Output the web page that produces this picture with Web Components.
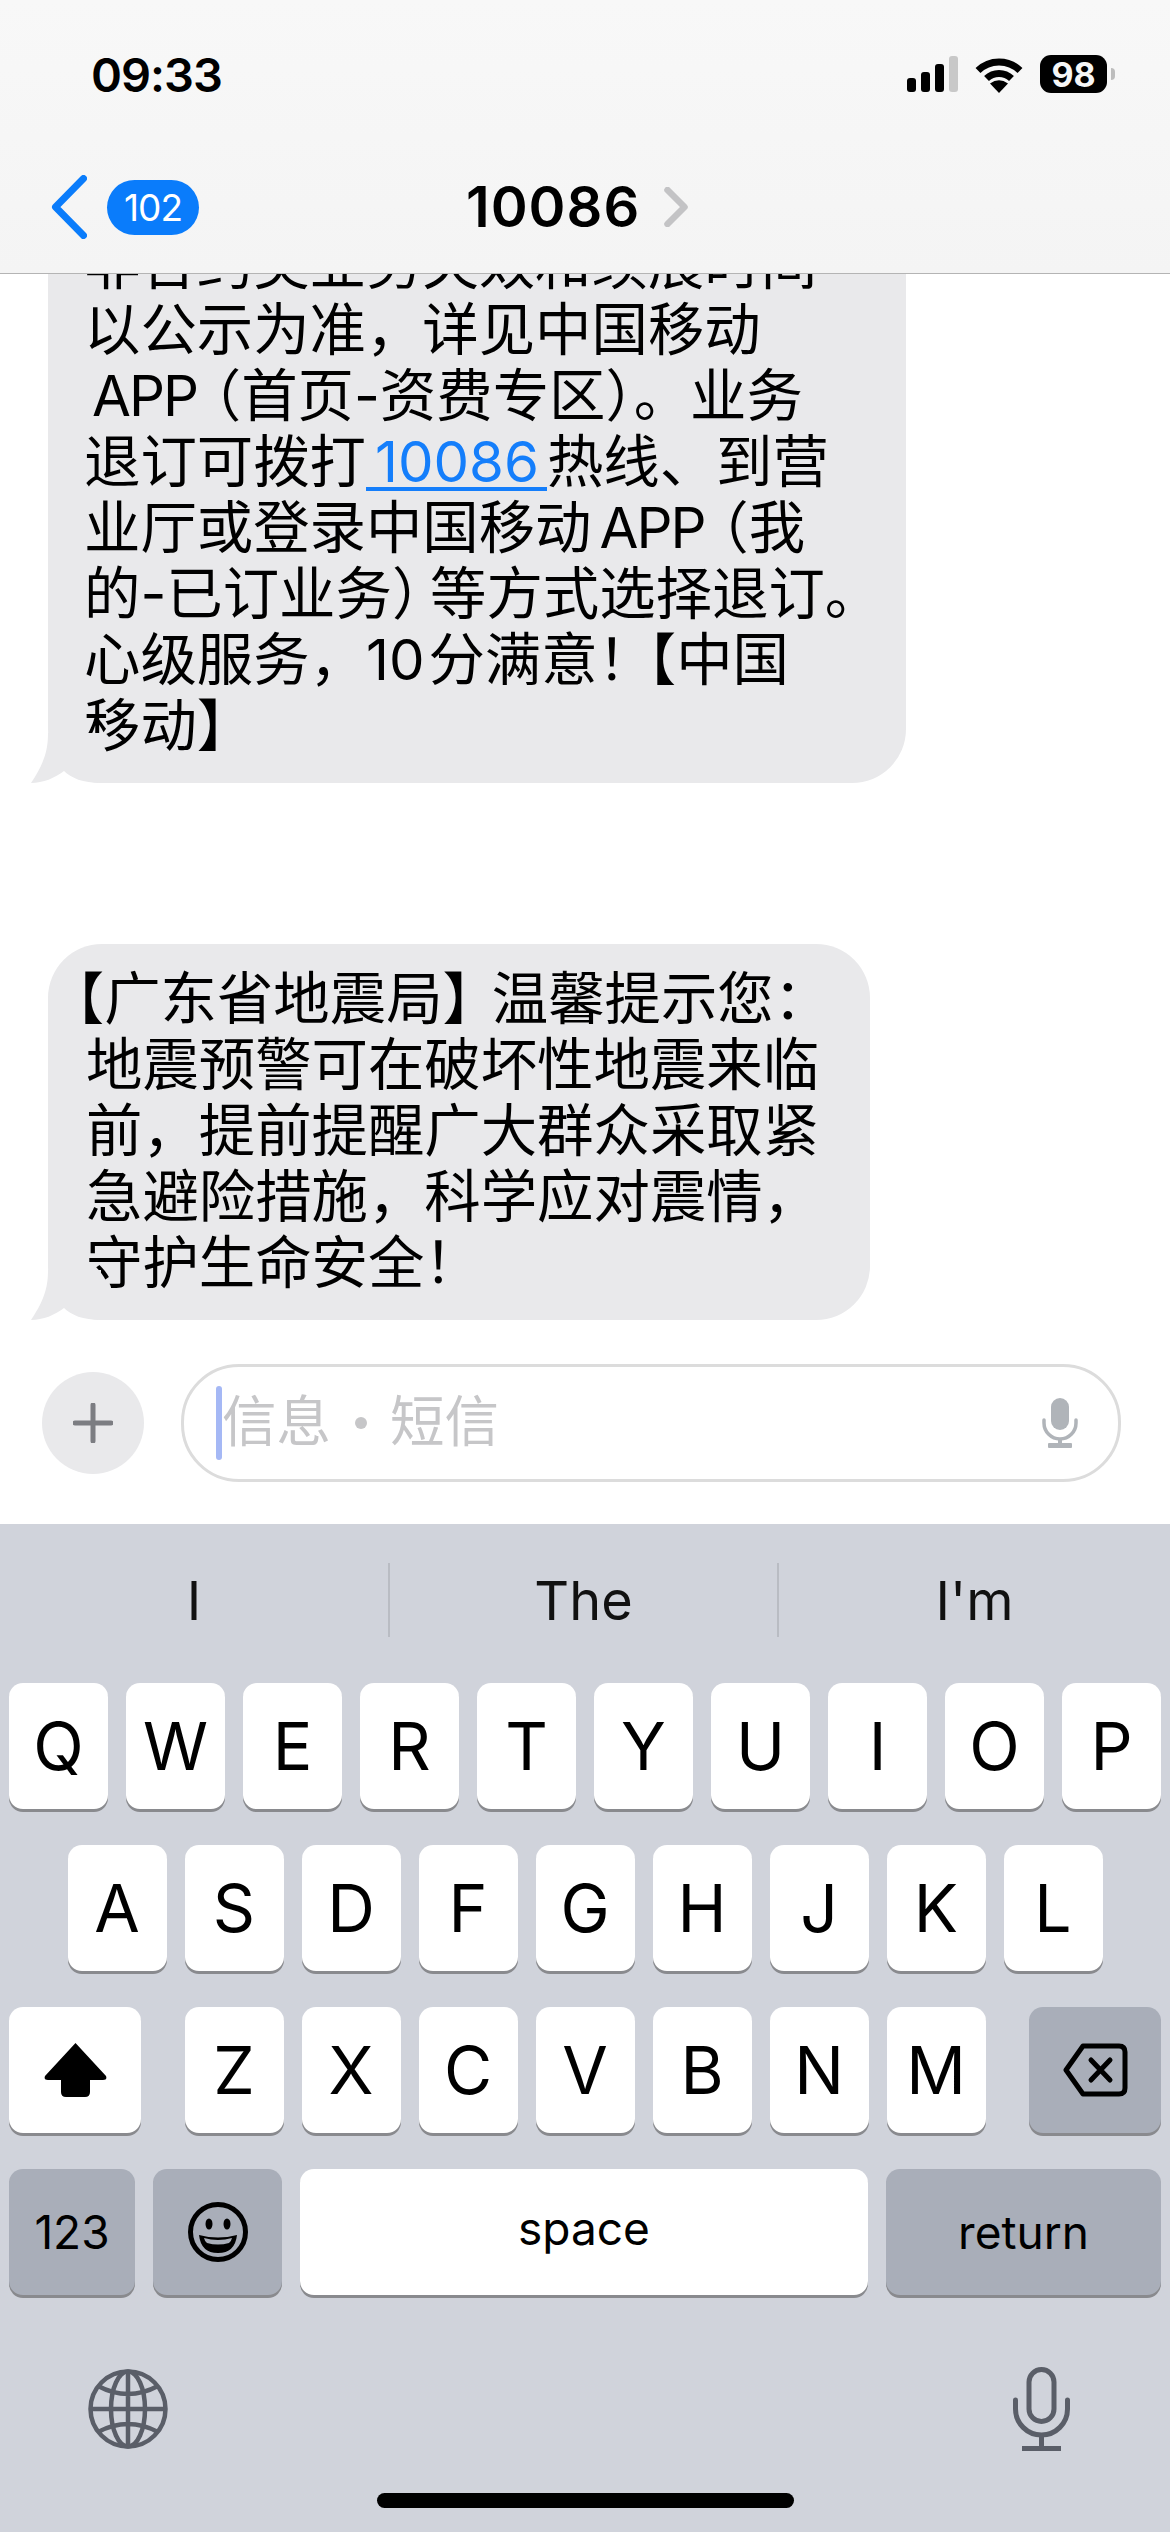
<!DOCTYPE html>
<html lang="zh-CN">
<head>
<meta charset="utf-8">
<title>10086</title>
<style>
html, body { margin: 0; padding: 0; background: #fff; }
body {
    width: 1170px;
    height: 2532px;
    overflow: hidden;
    display: flex;
    flex-direction: column;
    font-family: Inter, "Noto Sans CJK SC", sans-serif;
}
.h { font-feature-settings: "halt"; }
.gap { margin-left: 8px; }
.wide { margin-left: 16px; }
.link {
    color: #147efb;
    padding: 0 8px 0 9px;
    background: linear-gradient(#147efb, #147efb) no-repeat 0 60px / 100% 4px;
}
.latin { letter-spacing: -2px; }
.open { margin-left: -10px; }
.close { margin-right: 21px; }
.tight { letter-spacing: -6px; }
</style>
</head>
<body>
<sms-header></sms-header>
<sms-transcript>
    <sms-bubble style="--w: 858px; --pad: 36px">
        非合约类业务失效和续展时间<br>
        以公示为准，详见中国移动<br>
        <span class="gap latin">APP</span><span class="h wide">（</span>首页-资费专区<span class="h">）</span>。业务<br>
        退订可拨打<span class="link">10086</span>热线、到营<br>
        业厅或登录中国移动<span class="latin gap">APP</span><span class="h wide">（</span>我<br>
        的-已订业务<span class="h">）</span><span style="margin-left:10px"></span>等方式选择退订。<br>
        心级服务，10<span style="margin-left:4px"></span>分满意<span class="tight">！</span><span class="h">【</span>中国<br>
        移动<span class="h">】</span>
    </sms-bubble>
    <sms-bubble style="--w: 822px; margin-top: 161px">
        <span class="h open">【</span>广东省地震局<span class="h close">】</span>温馨提示您：<br>
        地震预警可在破坏性地震来临<br>
        前，提前提醒广大群众采取紧<br>
        急避险措施，科学应对震情，<br>
        守护生命安全！
    </sms-bubble>
</sms-transcript>
<sms-composer></sms-composer>
<ios-keyboard></ios-keyboard>

<script>
class SmsHeader extends HTMLElement {
    constructor() {
        super();
        this.attachShadow({mode: "open"}).innerHTML = `
        <style>
        :host { display: block; flex: none; height: 273px; background: linear-gradient(#f8f8f8, #f4f4f4); border-bottom: 1px solid #b4b4b4; position: relative; z-index: 2; color: #000; }
        .status { height: 148px; display: flex; align-items: center; padding: 0 55px 0 91px; box-sizing: border-box; }
        .time { font-size: 47px; font-weight: 600; letter-spacing: -1px; flex: 1; }
        .icons { display: flex; align-items: center; }
        .icons svg { display: block; }
        .battery { width: 67px; height: 38px; margin-left: 17px; background: #000; color: #f6f6f6; border-radius: 11px; font-size: 34px; font-weight: 700; display: flex; align-items: center; justify-content: center; }
        .nub { width: 4px; height: 12px; margin-left: 4px; background: #bdbdbd; border-radius: 0 6px 6px 0; }
        .nav { height: 118px; display: flex; align-items: center; padding-left: 51px; }
        .badge { width: 92px; height: 55px; margin-left: 20px; border-radius: 28px; background: #0a7cfb; color: #fff; font-size: 37px; display: flex; align-items: center; justify-content: center; letter-spacing: -1px; }
        .title { margin-left: 267px; font-size: 56px; font-weight: 600; letter-spacing: 1px; }
        .more { margin-left: 24px; display: block; }
        </style>
        <div class="status">
            <span class="time">09:33</span>
            <div class="icons">
                <svg width="51" height="36" viewBox="0 0 51 36">
                    <rect x="0" y="22" width="9" height="14" rx="3" fill="#000"/>
                    <rect x="14" y="16" width="9" height="20" rx="3" fill="#000"/>
                    <rect x="28" y="8" width="9" height="28" rx="3" fill="#000"/>
                    <rect x="42" y="0" width="9" height="36" rx="3" fill="#c8c8c8"/>
                </svg>
                <svg style="margin-left:17px" width="48" height="37" viewBox="0 0 48 37">
                    <path d="M3 14.5 A30 30 0 0 1 45 14.5" fill="none" stroke="#000" stroke-width="7"/>
                    <path d="M11.5 22.5 A18 18 0 0 1 36.5 22.5" fill="none" stroke="#000" stroke-width="7"/>
                    <path d="M24 37 L15 27.5 Q24 21 33 27.5 Z" fill="#000"/>
                </svg>
                <span class="battery">98</span>
                <span class="nub"></span>
            </div>
        </div>
        <div class="nav">
            <svg width="36" height="64" viewBox="0 0 36 64"><path d="M32.5 3.5 L4.5 32 L32.5 60.5" fill="none" stroke="#0a7cfb" stroke-width="7" stroke-linecap="round" stroke-linejoin="round"/></svg>
            <span class="badge">102</span>
            <span class="title">10086</span>
            <svg class="more" width="24" height="40" viewBox="0 0 24 40"><path d="M3.5 3 L20.5 20 L3.5 37" fill="none" stroke="#c3c3c5" stroke-width="6.5" stroke-linecap="round" stroke-linejoin="round"/></svg>
        </div>`;
    }
}

class SmsTranscript extends HTMLElement {
    constructor() {
        super();
        this.attachShadow({mode: "open"}).innerHTML = `
        <style>
        :host { display: flex; flex: 1; min-height: 0; flex-direction: column; justify-content: flex-end; overflow: hidden; padding: 0 0 44px 48px; background: #fff; }
        </style>
        <slot></slot>`;
    }
}

class SmsBubble extends HTMLElement {
    constructor() {
        super();
        this.attachShadow({mode: "open"}).innerHTML = `
        <style>
        :host { display: block; flex: none; position: relative; width: var(--w); box-sizing: border-box; padding: 22px 0 24px var(--pad, 38px); background: #e9e9eb; border-radius: 54px; font-size: 56.4px; line-height: 66px; color: #000; white-space: nowrap; }
        svg { position: absolute; left: -17px; bottom: 0; display: block; }
        </style>
        <svg width="70" height="50" viewBox="0 0 70 50"><path d="M17 0 C17 14 15 28 0 50 C12 50 24 45 33 38 C40 45 52 50 70 50 L70 0 Z" fill="#e9e9eb"/></svg>
        <slot></slot>`;
    }
}

class SmsComposer extends HTMLElement {
    constructor() {
        super();
        this.attachShadow({mode: "open"}).innerHTML = `
        <style>
        :host { display: flex; flex: none; height: 160px; box-sizing: border-box; padding: 0 49px 42px 42px; align-items: center; gap: 37px; background: #fff; }
        .plus { flex: none; width: 102px; height: 102px; border-radius: 50%; background: #e9e9eb; display: flex; align-items: center; justify-content: center; }
        .field { flex: 1; height: 118px; box-sizing: border-box; border: 3px solid #dcdcdc; border-radius: 58px; display: flex; align-items: center; padding: 0 40px 0 32px; }
        .caret { flex: none; width: 6px; height: 74px; border-radius: 3px; background: #a5b8f5; }
        .hint { flex: 1; font-size: 54.5px; line-height: 60px; margin-top: -4px; color: #c6c6c8; white-space: nowrap; display: flex; align-items: center; }
        .dot { width: 12px; height: 12px; border-radius: 50%; background: #c6c6c8; margin: 4px 23px 0 24px; }
        svg { display: block; }
        </style>
        <div class="plus"><svg width="40" height="40" viewBox="0 0 40 40"><path d="M20 2 V38 M2 20 H38" stroke="#7c7d82" stroke-width="5" stroke-linecap="round"/></svg></div>
        <div class="field">
            <span class="caret"></span>
            <span class="hint">信息<span class="dot"></span>短信</span>
            <svg width="36" height="50" viewBox="0 0 36 50">
                <rect x="9" y="0" width="18" height="32" rx="9" fill="#b0b4b9"/>
                <path d="M2 22 V25 A16 16 0 0 0 34 25 V22" fill="none" stroke="#b0b4b9" stroke-width="3.5" stroke-linecap="round"/>
                <path d="M18 41 V48" stroke="#b0b4b9" stroke-width="4"/>
                <rect x="6" y="45" width="24" height="5" rx="1" fill="#b0b4b9"/>
            </svg>
        </div>`;
    }
}

class KbKey extends HTMLElement {
    constructor() {
        super();
        this.attachShadow({mode: "open"}).innerHTML = `
        <style>
        :host { display: flex; flex: none; width: 99px; height: 126px; align-items: center; justify-content: center; background: #fff; color: #000; border-radius: 14px; box-shadow: 0 3px 0 #898a8e; font-size: 66px; line-height: 1; }
        :host([dark]) { background: #a9aeb9; }
        :host([small]) { font-size: 46px; }
        .raise { display: block; }
        :host([lift]) .raise { margin-top: -8px; }
        </style>
        <span class="raise"><slot></slot></span>`;
    }
}

const keyRow = (letters) => [...letters].map((c) => `<kb-key>${c}</kb-key>`).join("");

class IosKeyboard extends HTMLElement {
    constructor() {
        super();
        this.attachShadow({mode: "open"}).innerHTML = `
        <style>
        :host { display: block; flex: none; height: 1008px; background: #d0d3db; position: relative; }
        .suggest { height: 159px; display: grid; grid-template-columns: 390px 389px 391px; box-sizing: border-box; padding-top: 39px; }
        .suggest span { height: 74px; display: flex; align-items: center; justify-content: center; font-size: 54px; color: #111; border-right: 2px solid #b9bcc3; box-sizing: border-box; }
        .suggest span:last-child { border-right: 0; }
        .rows { display: flex; flex-direction: column; gap: 36px; padding: 0 9px; }
        .row { display: flex; justify-content: center; gap: 18px; }
        .row.split { justify-content: space-between; }
        .letters { display: flex; gap: 18px; }
        .extras { height: 84px; margin-top: 72px; padding: 0 100px 0 88px; display: flex; justify-content: space-between; align-items: center; }
        .home { width: 417px; height: 15px; margin: 42px auto 0; border-radius: 8px; background: #000; }
        svg { display: block; }
        </style>
        <div class="suggest"><span>I</span><span>The</span><span>I'm</span></div>
        <div class="rows">
            <div class="row">${keyRow("QWERTYUIOP")}</div>
            <div class="row">${keyRow("ASDFGHJKL")}</div>
            <div class="row split">
                <kb-key style="width:132px"><svg width="63" height="54" viewBox="0 0 63 54"><path d="M31.5 0 L62 33 Q63.5 37 59 37 H46 V49 Q46 54 41 54 H22 Q17 54 17 49 V37 H4 Q-0.5 37 1 33 Z" fill="#000"/></svg></kb-key>
                <div class="letters">${keyRow("ZXCVBNM")}</div>
                <kb-key dark style="width:132px"><svg width="65" height="54" viewBox="0 0 65 54"><path d="M20 3 H56 Q62 3 62 9 V45 Q62 51 56 51 H20 L3 27 Z" fill="none" stroke="#000" stroke-width="5" stroke-linejoin="round"/><path d="M28 17 L47 37 M47 17 L28 37" stroke="#000" stroke-width="5" stroke-linecap="round"/></svg></kb-key>
            </div>
            <div class="row">
                <kb-key dark small style="width:126px">123</kb-key>
                <kb-key dark style="width:129px"><svg width="60" height="60" viewBox="0 0 60 60"><circle cx="30" cy="30" r="27.5" fill="none" stroke="#000" stroke-width="5"/><ellipse cx="21" cy="22" rx="3.5" ry="5.5"/><ellipse cx="39" cy="22" rx="3.5" ry="5.5"/><path d="M11 33 Q30 38 49 33 Q47 51 30 51 Q13 51 11 33 Z" fill="#000"/><path d="M16 36 Q30 40 44 36 Q43 40 41 41 Q30 44 19 41 Q17 40 16 36 Z" fill="#a9aeb9"/></svg></kb-key>
                <kb-key small lift style="width:568px">space</kb-key>
                <kb-key dark small style="width:275px">return</kb-key>
            </div>
        </div>
        <div class="extras">
            <svg width="80" height="80" viewBox="0 0 80 80" fill="none" stroke="#5a5e68" stroke-width="4.5">
                <circle cx="40" cy="40" r="37.5"/>
                <ellipse cx="40" cy="40" rx="17" ry="37.5"/>
                <path d="M40 2.5 V77.5 M2.5 40 H77.5 M10 17 Q40 33 70 17 M10 63 Q40 47 70 63"/>
            </svg>
            <svg width="57" height="84" viewBox="0 0 57 84" fill="none" stroke="#5a5e68" stroke-width="5">
                <rect x="16" y="2.5" width="25" height="52" rx="12.5"/>
                <path d="M2.5 33 V42 A26 26 0 0 0 54.5 42 V33" stroke-linecap="round"/>
                <path d="M28.5 68 V80"/>
                <path d="M9 81.5 H48"/>
            </svg>
        </div>
        <div class="home"></div>`;
    }
}

customElements.define("sms-header", SmsHeader);
customElements.define("sms-transcript", SmsTranscript);
customElements.define("sms-bubble", SmsBubble);
customElements.define("sms-composer", SmsComposer);
customElements.define("kb-key", KbKey);
customElements.define("ios-keyboard", IosKeyboard);
</script>
</body>
</html>
